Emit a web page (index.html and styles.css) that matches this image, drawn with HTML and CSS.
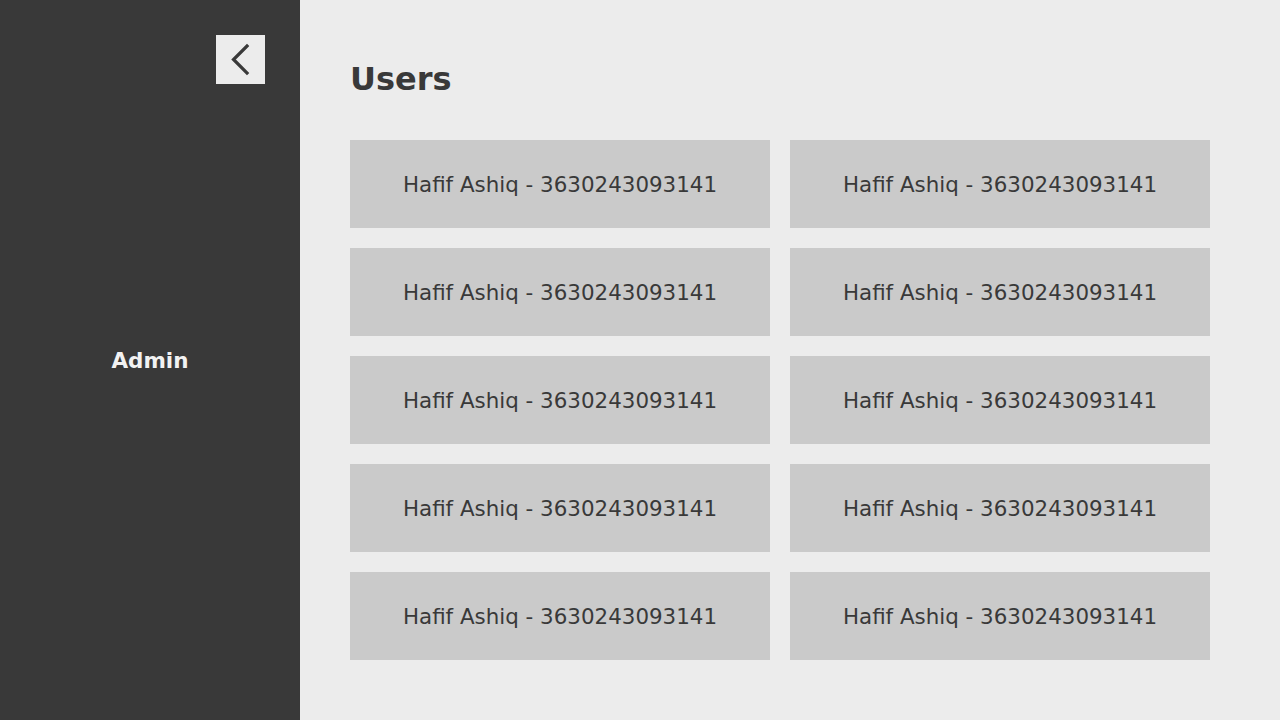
FILE: index.html
```html
<!DOCTYPE html>
<html>
<head>
<meta charset="utf-8">
<link rel="stylesheet" href="styles.css">
</head>
<body>
<div class="app">
  <aside class="sidebar">
    <div class="sidebar-top">
      <button class="back-btn" aria-label="Back">
        <svg width="49" height="49" viewBox="0 0 49 49"><path d="M31 11 L17.5 24.5 L31 38" fill="none" stroke="#393939" stroke-width="3.2" stroke-linecap="square"/></svg>
      </button>
    </div>
    <div class="sidebar-title">Admin</div>
  </aside>
  <main class="main">
    <h1 class="title">Users</h1>
    <div class="grid">
      <div class="card">Hafif Ashiq - 3630243093141</div>
      <div class="card">Hafif Ashiq - 3630243093141</div>
      <div class="card">Hafif Ashiq - 3630243093141</div>
      <div class="card">Hafif Ashiq - 3630243093141</div>
      <div class="card">Hafif Ashiq - 3630243093141</div>
      <div class="card">Hafif Ashiq - 3630243093141</div>
      <div class="card">Hafif Ashiq - 3630243093141</div>
      <div class="card">Hafif Ashiq - 3630243093141</div>
      <div class="card">Hafif Ashiq - 3630243093141</div>
      <div class="card">Hafif Ashiq - 3630243093141</div>
    </div>
  </main>
</div>
</body>
</html>
```
FILE: styles.css
```css
* { box-sizing: border-box; }
html, body { margin: 0; padding: 0; }
body {
  font-family: "DejaVu Sans", "Open Sans", sans-serif;
  background: #ececec;
  color: #393939;
}
.app {
  display: flex;
  width: 1280px;
  height: 720px;
}
.sidebar {
  width: 300px;
  flex: none;
  background: #393939;
  position: relative;
  display: flex;
  align-items: center;
  justify-content: center;
}
.sidebar-top {
  position: absolute;
  top: 35px;
  right: 35px;
}
.back-btn {
  width: 49px;
  height: 49px;
  padding: 0;
  border: 0;
  background: #ececec;
  display: block;
}
.back-btn svg { display: block; }
.sidebar-title {
  color: #f2f2f2;
  font-weight: bold;
  font-size: 21.5px;
  line-height: 1;
  padding-top: 2px;
}
.main {
  flex: 1;
  padding: 58px 70px 0 50px;
}
.title {
  margin: 0 0 40px;
  font-size: 32px;
  line-height: 42px;
  font-weight: bold;
  color: #393939;
}
.grid {
  display: grid;
  grid-template-columns: 420px 420px;
  gap: 20px;
}
.card {
  height: 88px;
  background: #cacaca;
  display: flex;
  align-items: center;
  justify-content: center;
  font-size: 21.4px;
  color: #393939;
}
```
